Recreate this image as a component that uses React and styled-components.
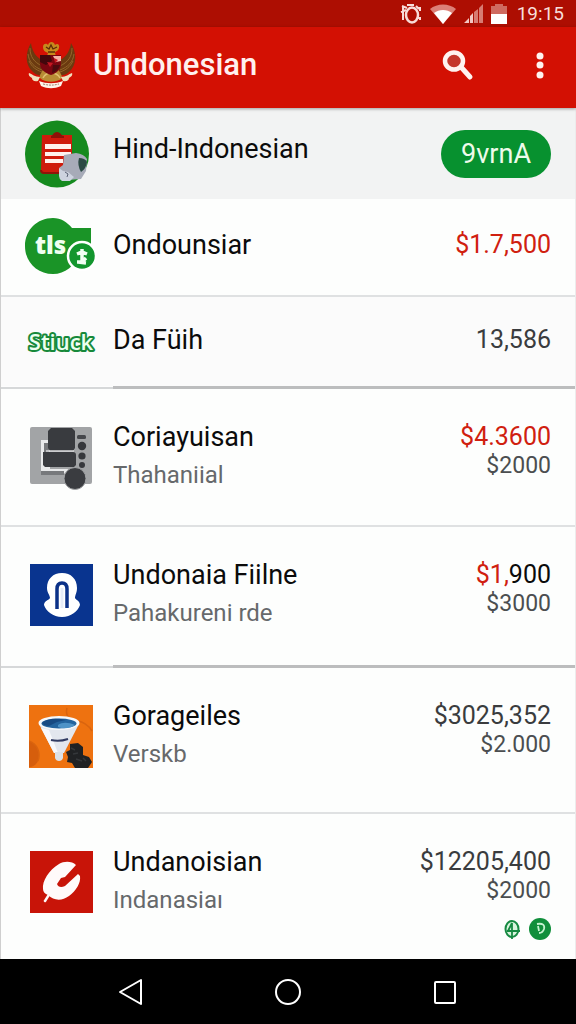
import React from "react";
import styled, { createGlobalStyle } from "styled-components";

const GlobalStyle = createGlobalStyle`
  * {
    box-sizing: border-box;
  }
  body {
    margin: 0;
    font-family: Roboto, "Liberation Sans", sans-serif;
    background-color: #fdfdfd;
  }
`;

const Page = styled.div`
  min-height: 100vh;
  display: flex;
  flex-direction: column;
`;

const StatusBar = styled.div`
  height: 27px;
  padding: 0 12px;
  background-color: #ad0e02;
  color: #f7dedb;
  display: flex;
  align-items: center;
  justify-content: flex-end;
  gap: 8px;
`;

const Clock = styled.span`
  font-size: 19px;
  line-height: 24px;
  margin-left: 2px;
`;

const AppBar = styled.header`
  padding: 14px 20px 19px 25px;
  background-color: #d31003;
  box-shadow: 0 1px 3px rgba(0, 0, 0, 0.35);
  display: flex;
  align-items: center;
  position: relative;
`;

const AppTitle = styled.h1`
  flex: 1;
  margin: 0 0 0 16px;
  color: #fff0ee;
  font-size: 31px;
  font-weight: 500;
  line-height: 48px;
`;

const IconButton = styled.button`
  width: ${(props) => props.$width}px;
  height: 40px;
  margin-left: ${(props) => props.$gap || 0}px;
  padding: 0;
  border: none;
  background: none;
  display: flex;
  align-items: center;
  justify-content: center;
  cursor: pointer;
`;

const List = styled.ul`
  flex: 1;
  margin: 0;
  padding: 0;
  list-style: none;
  border-left: 1px solid #cfcfcf;
  border-right: 1px solid #ececec;
`;

const Row = styled.li`
  min-height: ${(props) => props.$height}px;
  padding: ${(props) => (props.$tall ? "31px" : "0")} 24px 0 24px;
  background-color: ${(props) => props.$bg || "#fdfefd"};
  border-bottom: ${(props) => (props.$line ? "2px solid #dfe1e2" : "none")};
  display: flex;
  align-items: ${(props) => (props.$tall ? "flex-start" : "center")};
`;

const Divider = styled.li`
  height: 3px;
  padding-left: 112px;
  background: linear-gradient(#d6d8d9, #d6d8d9) bottom / 100% 2px no-repeat;
  &::before {
    content: "";
    display: block;
    height: 100%;
    background-color: #bcbdbe;
  }
`;

const IconBox = styled.div`
  width: 72px;
  margin-top: ${(props) => (props.$tall ? "6px" : "0")};
  display: flex;
  justify-content: center;
`;

const Texts = styled.div`
  flex: 1;
  min-width: 0;
  margin-left: 16px;
  padding-bottom: ${(props) => props.$lift || 0}px;
`;

const Name = styled.div`
  color: #0b0b0b;
  font-size: 27px;
  line-height: 34px;
`;

const Sub = styled.div`
  margin-top: 4px;
  color: #66696b;
  font-size: 24px;
  line-height: 34px;
`;

const Amounts = styled.div`
  text-align: right;
  padding-bottom: ${(props) => props.$lift || 0}px;
`;

const Amount = styled.div`
  color: ${(props) => props.$color || "#3a3c3e"};
  font-size: 25px;
  line-height: 34px;
`;

const Red = styled.span`
  color: #d0200f;
`;

const SmallAmount = styled.div`
  color: #4b4e50;
  font-size: 23px;
  line-height: 24px;
`;

const Badges = styled.div`
  margin-top: 14px;
  display: flex;
  justify-content: flex-end;
  gap: 8px;
`;

const PillButton = styled.button`
  padding: 8px 20px;
  border: none;
  border-radius: 24px;
  background-color: #07912f;
  color: #eefbea;
  font-family: inherit;
  font-size: 27px;
  line-height: 32px;
  cursor: pointer;
`;

const NavBar = styled.nav`
  padding: 13px 9% 12px;
  background-color: #000;
  display: grid;
  grid-template-columns: repeat(3, 1fr);
  justify-items: center;
`;

function Garuda() {
  return (
    <svg width="52" height="48" viewBox="0 0 52 48">
      <path d="M6 2C0 12 0 24 8 31c4 4 9 4 12 2l-3-14C11 16 7 10 6 2z" fill="#6b3a10" />
      <path d="M46 2c6 10 6 22-2 29-4 4-9 4-12 2l3-14c6-3 10-9 11-17z" fill="#6b3a10" />
      <path d="M5 7c0 9 4 14 12 18M3 13c1 8 6 13 14 16M4 20c3 6 7 9 13 11M47 7c0 9-4 14-12 18M49 13c-1 8-6 13-14 16M48 20c-3 6-7 9-13 11" stroke="#94662a" fill="none" />
      <path d="M18 6c0-4 4-4 5-2 1-4 6-4 7 0 2-2 5-1 4 3-1 4-4 3-4 5l1 3h-9l1-3c-2-1-5-2-5-6z" fill="#c58a1d" />
      <path d="M21 6l3 2 2-4 2 4 4-2M23 11h7" stroke="#5c2c08" fill="none" strokeWidth="1.3" />
      <path d="M19 27c-2 4-5 7-4 10 5 5 17 5 22 0 0-4-3-6-4-10z" fill="#b88c35" />
      <path d="M18 37c2-4 4-5 8-5s7 1 9 5" stroke="#e0c070" fill="none" strokeWidth="1.5" />
      <path d="M15 14h21v9c0 5-4 9-10 11-6-2-11-6-11-11z" fill="#7a0610" />
      <path d="M28 15h8v5l-5 1z" fill="#f4b3a6" />
      <path d="M15 14h10l2 6-6 4-6-3z" fill="#41070c" />
      <path d="M28 24h7c-1 4-4 7-8 8z" fill="#4a0a0e" />
      <path d="M29 17l4 2-3 3zM22 21l6 1-3 4z" fill="#c71722" />
      <path d="M4 32c3 1 6 4 11 4l-2 4c-4 1-6-1-6-3-2-1-4-3-3-5zM47 32c-3 1-6 4-11 4l2 4c4 1 6-1 6-3 2-1 4-3 3-5z" fill="#f1dfbd" />
      <path d="M14 40c8 3 16 3 24 0l-2 5c-7 3-13 3-20 0z" fill="#fff4ea" />
      <path d="M18 43c6 1.500 10 1.500 16 0" stroke="#9c8471" fill="none" strokeDasharray="2 1" />
    </svg>
  );
}

function AlarmIcon() {
  return (
    <svg width="22" height="22" viewBox="0 0 22 22" fill="none" stroke="#f8dcd8">
      <ellipse cx="12" cy="12" rx="6" ry="7.500" strokeWidth="2.500" />
      <path d="M2 3l5 2M1 9l5-2M3 3v14M16 3l3 3M18 5h2v3M18 15h2v2M7 2h7" strokeWidth="2" />
    </svg>
  );
}

function WifiIcon() {
  return (
    <svg width="26" height="20" viewBox="0 0 26 20">
      <path d="M0 5C7-1 19-1 26 5L13 20z" fill="#dc8077" />
      <path d="M4 9c5-4 13-4 18 0l-9 11z" fill="#fff" />
    </svg>
  );
}

function SignalIcon() {
  return (
    <svg width="19" height="19" viewBox="0 0 19 19">
      <path d="M0 19h5v-5zM6 19h3V9L6 12z" fill="#f3c8c3" />
      <path d="M10 19h4V5l-4 3zM15 19h4V0l-4 4z" fill="#d77b72" />
    </svg>
  );
}

function BatteryIcon() {
  return (
    <svg width="16" height="20" viewBox="0 0 16 20">
      <path d="M0 2h4V0h8v2h4v9H0z" fill="#cf6a60" />
      <path d="M0 10h16v10H0z" fill="#fff" />
    </svg>
  );
}

function SearchIcon() {
  return (
    <svg width="32" height="32" viewBox="0 0 32 32">
      <ellipse cx="12" cy="12" rx="9" ry="8.500" fill="#c4372c" stroke="#fff3f0" strokeWidth="4.500" />
      <path d="M19 18l9 10" stroke="#fff3f0" strokeWidth="5" strokeLinecap="round" />
    </svg>
  );
}

function MoreIcon() {
  return (
    <svg width="8" height="28" viewBox="0 0 8 28" fill="#fff3f0">
      <circle cx="4" cy="5" r="3.500" />
      <circle cx="4" cy="14" r="3.500" />
      <circle cx="4" cy="24" r="3.500" />
    </svg>
  );
}

function ClipboardIcon() {
  return (
    <svg width="72" height="68" viewBox="0 0 72 68">
      <ellipse cx="32" cy="34" rx="32" ry="33.500" fill="#158a1e" />
      <path d="M17 15h30v35q0 3-3 3H18q-2 0-2-3z" fill="#cf1b0c" />
      <path d="M16 50q0 3 3 3h20" stroke="#8f1409" fill="none" strokeWidth="2" />
      <path d="M26 18v-2c2 0 2-4 6-4s4 4 7 4v2z" fill="#8d1207" />
      <path d="M20 24h26v5H20zM20 32h26v4H20zM20 39h18v4H20z" fill="#fff1ed" />
      <path d="M39 35l12-2q8 1 11 6l-1 12-5 8-14 1-4-3-4-9 4-3z" fill="#a7abb8" />
      <path d="M34 48l4 3 5 1 6 5-4 4h-8q-3-2-3-5z" fill="#cdd3df" />
      <path d="M54 38q6 0 8 4-1 7-6 10-4-7-2-14z" fill="#2c4a44" />
      <path d="M40 52l3 2-1 3" stroke="#596174" fill="none" />
    </svg>
  );
}

function TlsIcon() {
  return (
    <svg width="72" height="58" viewBox="0 0 72 58">
      <path d="M28 0c8 0 14 4 19 10h19v26H54c-4 12-14 20-26 20C12 56 0 44 0 28S12 0 28 0z" fill="#1a9427" />
      <text x="10" y="36" fontFamily="Open Sans, sans-serif" fontSize="24" fontWeight="800" fill="#f0fff0">tls</text>
      <circle cx="57" cy="38" r="14" fill="#13962e" stroke="#fff" strokeWidth="2.500" />
      <path d="M57 31v12M52 36l5-2 5 2M52 44h5l4-4M53 44l8 1" stroke="#f1fff3" strokeWidth="3.500" fill="none" />
    </svg>
  );
}

function StuckLogo() {
  return (
    <svg width="72" height="32" viewBox="0 0 72 32">
      <text
        x="36"
        y="24"
        textAnchor="middle"
        fontFamily="Open Sans, sans-serif"
        fontSize="22"
        fontWeight="600"
        fill="#ecfff0"
        stroke="#17893a"
        strokeWidth="4"
        strokeLinejoin="round"
        paintOrder="stroke"
      >
        Stiuck
      </text>
    </svg>
  );
}

function DeviceIcon() {
  return (
    <svg width="62" height="64" viewBox="0 0 62 64">
      <rect y="1" width="62" height="57" rx="2" fill="#a2a4a6" />
      <path d="M11 14h9v29h24v7l-11-3H11z" fill="#e9eaeb" />
      <path d="M14 17h5v22h-5zM11 45h23v4H11z" fill="#77797c" />
      <path d="M21 2h21l3 3v17l-2 3H20l-2-3V5z" fill="#393b3f" />
      <path d="M13 26h30q3 0 3 3v10l-2 2H15l-2-2z" fill="#393b3f" />
      <path d="M16 25h28" stroke="#d8dadb" strokeWidth="1.500" />
      <rect x="47" y="9" width="9" height="4" rx="1.500" fill="#45474b" />
      <circle cx="52" cy="20" r="4.200" fill="#36383c" />
      <circle cx="52" cy="30" r="3.600" fill="#36383c" />
      <circle cx="52" cy="39" r="3" fill="#36383c" />
      <circle cx="45" cy="52.500" r="11" fill="#3a3c40" stroke="#a2a4a6" />
    </svg>
  );
}

function BlueIcon() {
  return (
    <svg width="63" height="62" viewBox="0 0 63 62">
      <rect width="63" height="62" fill="#09348f" />
      <path d="M32 9c9 0 15 6 15 15 0 5-2 7-2 10 1 2 5 3 5 7-2 6-9 12-18 12S16 47 14 41c0-4 5-5 6-7 0-3-3-5-3-10 0-9 6-15 15-15z" fill="#fff" />
      <path d="M27 45V25q0-6 5-6t5 6v19" stroke="#0b3188" strokeWidth="3.500" fill="none" />
      <path d="M32 24v20" stroke="#e6ecf8" strokeWidth="3" />
    </svg>
  );
}

function FunnelIcon() {
  return (
    <svg width="64" height="63" viewBox="0 0 64 63">
      <rect width="64" height="63" fill="#ee7210" />
      <path d="M0 36c8 3 12 11 9 20-2 4-5 6-9 6z" fill="#d65e0c" />
      <path d="M38 3c-2 8 2 12 10 13s12 5 15 10M0 36c8 3 12 11 9 20" stroke="#d9640f" strokeWidth="1.500" fill="none" />
      <path d="M10 19l15 29h10l15-29z" fill="#e3e7ee" />
      <path d="M12 23l13 25h4L20 25z" fill="#f8f9fc" />
      <ellipse cx="30" cy="18" rx="20.500" ry="7" fill="#f5f8fb" />
      <ellipse cx="30" cy="18.500" rx="17.500" ry="5" fill="#24649e" />
      <path d="M13 18c5-5 15-5 24-3l-9 2-8 4c-3 0-6-1-7-3z" fill="#174a82" />
      <path d="M29 20c4-3 10-3 17 0-5 4-12 4-17 2z" fill="#4e93c7" />
      <path d="M22 35q8 2 17-1" stroke="#313b62" strokeWidth="2" fill="none" />
      <path d="M26 47h8v6q-1 3-4 3t-4-3z" fill="#dce1e7" />
      <path d="M41 39l8-1 5 4v8l6 2 3 5-4 6H46l-3-5-5-1 1-5-2-5 4-2z" fill="#202224" />
      <path d="M42 43l4 2M47 54l6 2M44 49l5-1M54 53l3 3" stroke="#34373a" strokeWidth="1.500" />
    </svg>
  );
}

function RedIcon() {
  return (
    <svg width="63" height="62" viewBox="0 0 63 62">
      <rect width="63" height="62" fill="#c81408" />
      <path
        d="M46 14c-4-4-12-4-17-1C19 19 12 30 13 38c0 3 2 5 5 6 6 6 14 6 21 1 7-5 12-13 11-20l-2-2-13 12c-4 2-7 1-8-2l4-6 4-1z"
        fill="#fffafa"
      />
      <path d="M20 42l-5 8" stroke="#fffafa" strokeWidth="2.500" strokeLinecap="round" />
    </svg>
  );
}

function CoinBadge() {
  return (
    <svg width="18" height="24" viewBox="0 0 18 24" fill="none" stroke="#168a42">
      <ellipse cx="9" cy="12" rx="6.500" ry="8" strokeWidth="2" fill="#d8f4dd" />
      <path d="M9 6v16M4 14h13M9 6l-4 8" strokeWidth="1.800" />
    </svg>
  );
}

function DBadge() {
  return (
    <svg width="22" height="24" viewBox="0 0 22 24">
      <circle cx="11" cy="12" r="11" fill="#108f3b" />
      <path d="M8 7c6-1 8 1 7 5-1 3-3 4-5 4M9 9l1 5" stroke="#c4f3cf" strokeWidth="1.800" fill="none" />
    </svg>
  );
}

const items = [
  { name: "Coriayuisan", sub: "Thahaniial", amount: <Red>$4.3600</Red>, small: "$2000", icon: <DeviceIcon />, height: 138, line: true },
  { name: "Undonaia Fiilne", sub: "Pahakureni rde", amount: <><Red>$1,</Red>900</>, color: "#0b0b0b", small: "$3000", icon: <BlueIcon />, height: 138, divider: true },
  { name: "Gorageiles", sub: "Verskb", amount: "$3025,352", small: "$2.000", icon: <FunnelIcon />, height: 146, line: true },
  { name: "Undanoisian", sub: "Indanasiaı", amount: "$12205,400", small: "$2000", icon: <RedIcon />, height: 145, badges: true },
];

function App() {
  return (
    <Page>
      <GlobalStyle />
      <StatusBar>
        <AlarmIcon />
        <WifiIcon />
        <SignalIcon />
        <BatteryIcon />
        <Clock>19:15</Clock>
      </StatusBar>
      <AppBar>
        <Garuda />
        <AppTitle>Undonesian</AppTitle>
        <IconButton $width={40} aria-label="Search">
          <SearchIcon />
        </IconButton>
        <IconButton $width={32} $gap={46} aria-label="More">
          <MoreIcon />
        </IconButton>
      </AppBar>

      <List>
        <Row $height={91} $bg="#f2f3f3">
          <IconBox>
            <ClipboardIcon />
          </IconBox>
          <Texts $lift={10}>
            <Name>Hind-Indonesian</Name>
          </Texts>
          <PillButton>9vrnA</PillButton>
        </Row>
        <Row $height={98} $line>
          <IconBox>
            <TlsIcon />
          </IconBox>
          <Texts $lift={4}>
            <Name>Ondounsiar</Name>
          </Texts>
          <Amounts $lift={4}>
            <Amount><Red>$1.7,500</Red></Amount>
          </Amounts>
        </Row>
        <Row $height={89} $bg="#fbfbfb">
          <IconBox>
            <StuckLogo />
          </IconBox>
          <Texts $lift={4}>
            <Name>Da Füih</Name>
          </Texts>
          <Amounts $lift={4}>
            <Amount>13,586</Amount>
          </Amounts>
        </Row>
        <Divider />

        {items.map((item) => (
          <React.Fragment key={item.name}>
            <Row $height={item.height} $line={item.line} $tall>
              <IconBox $tall>{item.icon}</IconBox>
              <Texts>
                <Name>{item.name}</Name>
                <Sub>{item.sub}</Sub>
              </Texts>
              <Amounts>
                <Amount $color={item.color}>{item.amount}</Amount>
                <SmallAmount>{item.small}</SmallAmount>
                {item.badges && (
                  <Badges>
                    <CoinBadge />
                    <DBadge />
                  </Badges>
                )}
              </Amounts>
            </Row>
            {item.divider && <Divider />}
          </React.Fragment>
        ))}
      </List>

      <NavBar>
        <IconButton $width={48} aria-label="Back">
          <svg width="26" height="28" viewBox="0 0 26 28" fill="none" stroke="#fff" strokeWidth="2">
            <path d="M23 2v24L2 14z" strokeLinejoin="round" />
          </svg>
        </IconButton>
        <IconButton $width={48} aria-label="Home">
          <svg width="28" height="28" viewBox="0 0 28 28" fill="none" stroke="#fff" strokeWidth="2">
            <circle cx="14" cy="14" r="12" />
          </svg>
        </IconButton>
        <IconButton $width={48} aria-label="Recent apps">
          <svg width="24" height="24" viewBox="0 0 24 24" fill="none" stroke="#fff" strokeWidth="2">
            <rect x="2" y="2" width="20" height="21" rx="1" />
          </svg>
        </IconButton>
      </NavBar>
    </Page>
  );
}

export default App;
